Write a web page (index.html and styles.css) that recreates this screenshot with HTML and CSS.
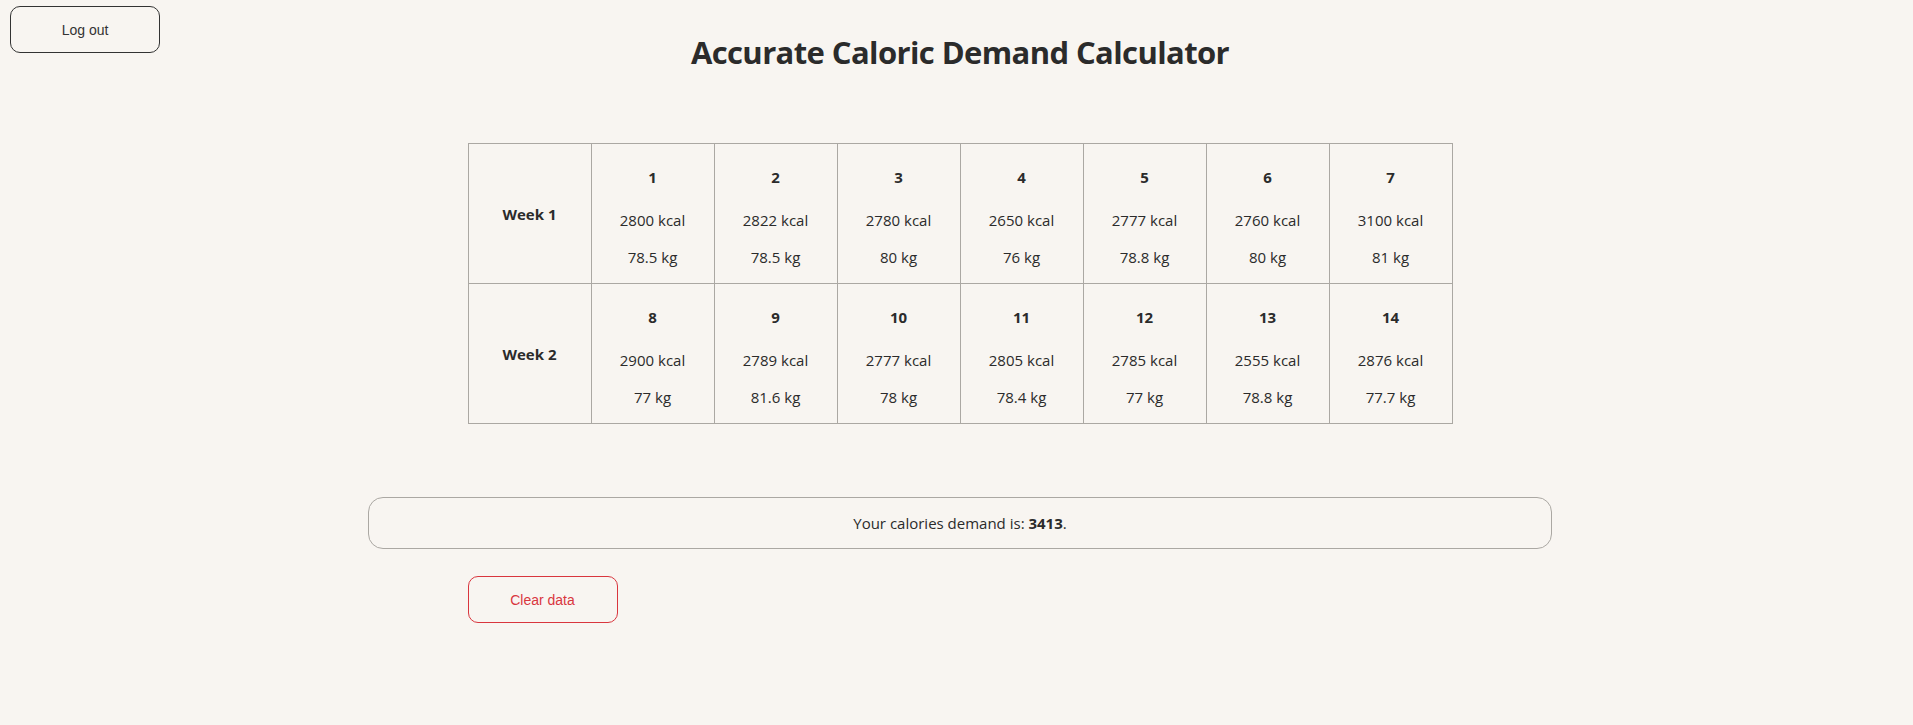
FILE: index.html
```html
<!DOCTYPE html>
<html lang="en">
<head>
<meta charset="utf-8">
<title>Accurate Caloric Demand Calculator</title>
<link rel="stylesheet" href="styles.css">
</head>
<body>
<div class="page">
  <header class="header">
    <button class="btn btn-logout">Log out</button>
    <h1 class="title">Accurate Caloric Demand Calculator</h1>
    <div></div>
  </header>
  <main class="main">
    <table class="weeks">
      <tbody>
        <tr>
          <th class="week">Week 1</th>
          <td><p class="day">1</p><p class="kcal">2800 kcal</p><p class="kg">78.5 kg</p></td>
          <td><p class="day">2</p><p class="kcal">2822 kcal</p><p class="kg">78.5 kg</p></td>
          <td><p class="day">3</p><p class="kcal">2780 kcal</p><p class="kg">80 kg</p></td>
          <td><p class="day">4</p><p class="kcal">2650 kcal</p><p class="kg">76 kg</p></td>
          <td><p class="day">5</p><p class="kcal">2777 kcal</p><p class="kg">78.8 kg</p></td>
          <td><p class="day">6</p><p class="kcal">2760 kcal</p><p class="kg">80 kg</p></td>
          <td><p class="day">7</p><p class="kcal">3100 kcal</p><p class="kg">81 kg</p></td>
        </tr>
        <tr>
          <th class="week">Week 2</th>
          <td><p class="day">8</p><p class="kcal">2900 kcal</p><p class="kg">77 kg</p></td>
          <td><p class="day">9</p><p class="kcal">2789 kcal</p><p class="kg">81.6 kg</p></td>
          <td><p class="day">10</p><p class="kcal">2777 kcal</p><p class="kg">78 kg</p></td>
          <td><p class="day">11</p><p class="kcal">2805 kcal</p><p class="kg">78.4 kg</p></td>
          <td><p class="day">12</p><p class="kcal">2785 kcal</p><p class="kg">77 kg</p></td>
          <td><p class="day">13</p><p class="kcal">2555 kcal</p><p class="kg">78.8 kg</p></td>
          <td><p class="day">14</p><p class="kcal">2876 kcal</p><p class="kg">77.7 kg</p></td>
        </tr>
      </tbody>
    </table>
    <div class="result">Your calories demand is: <b>3413</b>.</div>
    <div class="actions">
      <button class="btn btn-clear">Clear data</button>
    </div>
  </main>
</div>
</body>
</html>
```
FILE: styles.css
```css
html, body {
  margin: 0;
  padding: 0;
  background: #f8f5f1;
}
body {
  font-family: "Open Sans", "Noto Sans", sans-serif;
  color: #2b2b2b;
  font-size: 16px;
}
.page {
  padding-left: 7px;
  min-height: 725px;
  box-sizing: border-box;
}
.header {
  display: grid;
  grid-template-columns: 1fr auto 1fr;
  align-items: start;
}
.btn {
  font-family: "Liberation Sans", Arial, sans-serif;
  font-size: 14px;
  width: 150px;
  height: 47px;
  background: transparent;
  border-radius: 10px;
  cursor: pointer;
}
.btn-logout {
  margin: 6px 0 0 3px;
  border: 1px solid #333;
  color: #333;
  justify-self: start;
}
.title {
  margin: 32px 0 0;
  font-size: 31px;
  line-height: 40px;
  font-weight: 700;
  letter-spacing: -0.6px;
  color: #2b2b2b;
}
.main {
  display: flex;
  flex-direction: column;
  align-items: center;
}
.weeks {
  margin-top: 71px;
  width: 985px;
  border-collapse: collapse;
  table-layout: fixed;
}
.weeks th, .weeks td {
  border: 1px solid #aba8a3;
  padding: 0;
  text-align: center;
  vertical-align: middle;
  font-size: 15px;
}
.weeks th {
  font-weight: 700;
}
.weeks p {
  margin: 0;
  line-height: 22px;
}
.weeks .day {
  margin: 22px 0 21px;
  font-weight: 700;
}
.weeks .kcal {
  margin-bottom: 15px;
}
.weeks .kg {
  margin-bottom: 15px;
}
.result {
  margin-top: 73px;
  width: 1184px;
  height: 52px;
  box-sizing: border-box;
  border: 1px solid #aba8a3;
  border-radius: 15px;
  line-height: 50px;
  text-align: center;
  font-size: 15px;
}
.actions {
  width: 985px;
  margin-top: 27px;
}
.btn-clear {
  border: 1px solid #d9363e;
  color: #d9363e;
}
```
